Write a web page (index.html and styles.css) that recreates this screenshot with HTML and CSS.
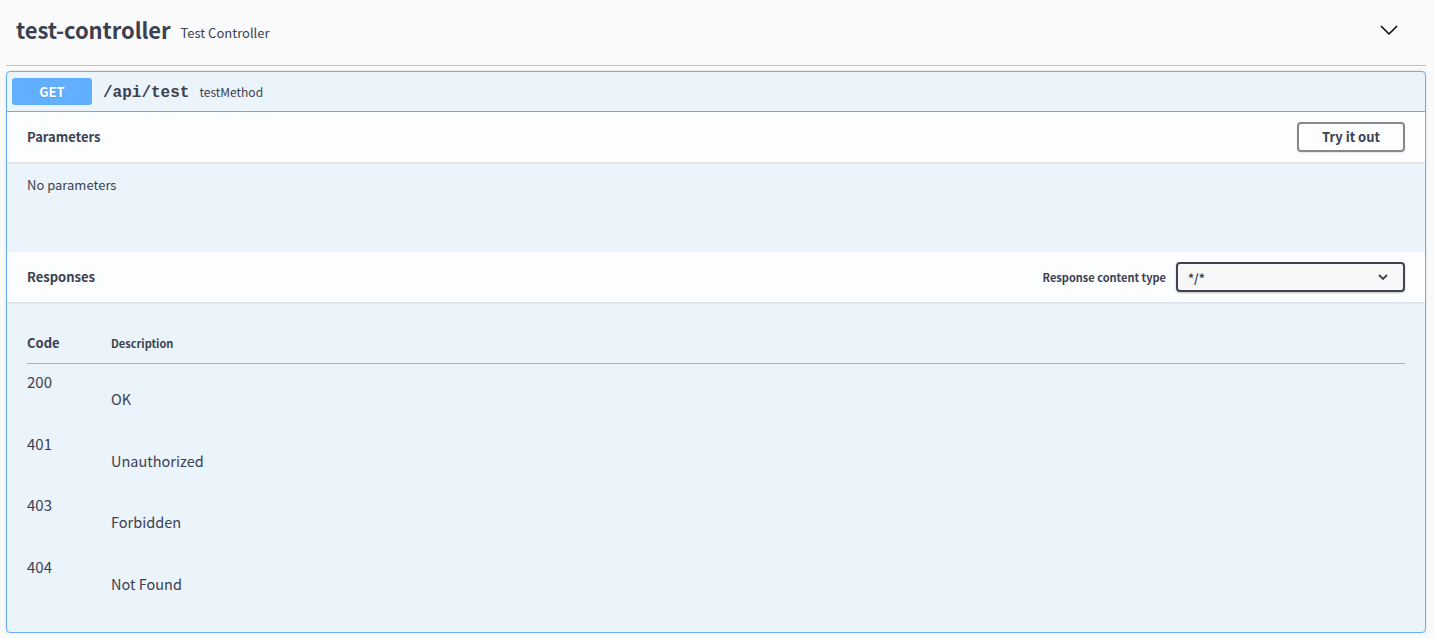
FILE: index.html
```html
<!DOCTYPE html>
<html>
<head>
<meta charset="utf-8">
<link rel="stylesheet" href="styles.css">
</head>
<body>
<div class="wrapper">
  <div class="tag">
    <div class="tag-title">
      <span class="tag-name">test-controller</span>
      <span class="tag-desc">Test Controller</span>
    </div>
    <svg class="tag-arrow" width="20" height="20" viewBox="0 0 20 20"><path d="M2 6 L10 14 L18 6" fill="none" stroke="#000" stroke-width="1.5"/></svg>
  </div>

  <div class="opblock">
    <div class="summary">
      <span class="method">GET</span>
      <span class="path">/api/test</span>
      <span class="summary-desc">testMethod</span>
    </div>

    <div class="section-header">
      <h4>Parameters</h4>
      <button class="try-out">Try it out</button>
    </div>
    <div class="params-body">
      <div class="no-params">No parameters</div>
    </div>

    <div class="section-header">
      <h4>Responses</h4>
      <div class="content-type">
        <span class="ct-label">Response content type</span>
        <div class="select">
          <span>*/*</span>
          <svg width="12" height="12" viewBox="0 0 12 12"><path d="M2 4 L6 8 L10 4" fill="none" stroke="#3b4151" stroke-width="1.8"/></svg>
        </div>
      </div>
    </div>
    <div class="responses-body">
      <table class="responses">
        <thead>
          <tr><th class="col-code">Code</th><th class="col-desc">Description</th></tr>
        </thead>
        <tbody>
          <tr><td class="status">200</td><td class="desc"><p>OK</p></td></tr>
          <tr><td class="status">401</td><td class="desc"><p>Unauthorized</p></td></tr>
          <tr><td class="status">403</td><td class="desc"><p>Forbidden</p></td></tr>
          <tr><td class="status">404</td><td class="desc"><p>Not Found</p></td></tr>
        </tbody>
      </table>
    </div>
  </div>
</div>
</body>
</html>
```

FILE: styles.css
```css
html, body {
  margin: 0;
  padding: 0;
  background: #fafafa;
  font-family: "Noto Sans CJK KR", "Noto Sans", sans-serif;
  color: #3b4151;
}
.wrapper {
  padding: 0 9px 0 6px;
}
.tag {
  display: flex;
  align-items: center;
  justify-content: space-between;
  height: 65px;
  border-bottom: 1px solid rgba(59, 65, 81, 0.3);
  padding: 0 27px 0 10px;
}
.tag-title {
  display: flex;
  align-items: baseline;
  line-height: 30px;
  margin-top: -3px;
}
.tag-name {
  font-size: 22px;
  font-weight: 700;
  letter-spacing: -0.1px;
  color: #3b4151;
}
.tag-desc {
  font-size: 13px;
  margin-left: 10px;
  position: relative;
  top: -1px;
  color: #3b4151;
}
.tag-arrow {
  margin-top: -5px;
}
.opblock {
  margin-top: 5px;
  border: 1px solid #61affe;
  border-radius: 4px;
  background: #ebf3fb;
  box-shadow: 0 0 3px rgba(0, 0, 0, 0.12);
  overflow: hidden;
}
.summary {
  display: flex;
  align-items: center;
  padding: 6px 5px 6px;
  border-bottom: 1px solid #61affe;
}
.method {
  display: inline-block;
  width: 80px;
  height: 27px;
  line-height: 27px;
  text-align: center;
  background: #61affe;
  color: #fff;
  font-weight: 700;
  font-size: 13px;
  border-radius: 3px;
  text-shadow: 0 1px 0 rgba(0,0,0,.1);
}
.path {
  font-family: "Liberation Mono", "DejaVu Sans Mono", monospace;
  font-weight: 700;
  font-size: 16px;
  margin-left: 11px;
  color: #3b4151;
  padding-top: 2px;
}
.summary-desc {
  font-size: 12px;
  margin-left: 10px;
  color: #3b4151;
}
.section-header {
  display: flex;
  align-items: center;
  justify-content: space-between;
  height: 50px;
  padding: 0 20px;
  background: rgba(255, 255, 255, 0.8);
  box-shadow: 0 1px 2px rgba(0, 0, 0, 0.1);
  position: relative;
}
.section-header h4 {
  margin: 0;
  font-size: 13px;
  font-weight: 700;
  line-height: 20px;
  color: #3b4151;
}
.try-out {
  width: 108px;
  height: 30px;
  border: 2px solid #888;
  border-radius: 4px;
  background: transparent;
  font-family: "Noto Sans CJK KR", "Noto Sans", sans-serif;
  font-weight: 700;
  font-size: 13px;
  line-height: 20px;
  color: #3b4151;
  box-shadow: 0 1px 2px rgba(0,0,0,.1);
  padding: 0;
}
.params-body {
  height: 50px;
  padding: 20px;
}
.no-params {
  font-size: 13px;
  line-height: 2px;
  padding-top: 2px;
}
.content-type {
  display: flex;
  align-items: center;
}
.ct-label {
  font-size: 11px;
  font-weight: 700;
  margin-right: 10px;
}
.select {
  height: 26px;
  border: 2px solid #41444e;
  border-radius: 4px;
  background: #f7f7f7;
  box-shadow: 0 1px 2px rgba(0,0,0,.25);
  display: flex;
  align-items: center;
  justify-content: space-between;
  padding: 0 14px 0 10px;
  box-sizing: content-box;
  width: 201px;
  font-size: 12px;
  font-weight: 700;
}
.responses-body {
  padding: 22px 20px 22px;
}
.responses {
  width: 100%;
  border-collapse: collapse;
}
.responses th {
  text-align: left;
  font-weight: 700;
  padding: 10px 0 11px;
  line-height: 18px;
  border-bottom: 1px solid rgba(59, 65, 81, 0.2);
}
.col-code {
  font-size: 13px;
  width: 84px;
}
.col-desc {
  font-size: 11px;
}
.responses td {
  vertical-align: top;
  padding: 9px 0 0;
  line-height: 18px;
}
.status {
  font-size: 15px;
}
.desc p {
  margin: 17px 0 17.5px;
  font-size: 14.5px;
  line-height: 18px;
}
```
